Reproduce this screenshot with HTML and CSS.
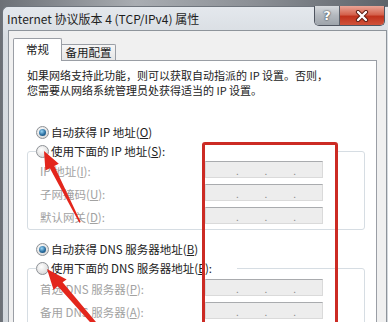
FILE: index.html
```html
<!DOCTYPE html>
<html lang="zh-CN">
<head>
<meta charset="utf-8">
<link rel="stylesheet" href="styles.css">
</head>
<body>
<div class="desk">
  <div class="window">
    <div class="titlebar">
      <span class="title">Internet 协议版本 4 (TCP/IPv4) 属性</span>
      <div class="caption-btns">
        <span class="cbtn help">?</span>
        <span class="cbtn close">
          <svg width="14" height="12" viewBox="0 0 14 12"><path d="M3 2 L11 10 M11 2 L3 10" stroke="#5a1a10" stroke-width="4.2" stroke-linecap="round"/><path d="M3 2 L11 10 M11 2 L3 10" stroke="#fff" stroke-width="2.4" stroke-linecap="round"/></svg>
        </span>
      </div>
    </div>
    <div class="client">
      <div class="tabs">
        <div class="tab active">常规</div>
        <div class="tab">备用配置</div>
      </div>
      <div class="panel">
        <p class="intro">如果网络支持此功能，则可以获取自动指派的 IP 设置。否则，<br>您需要从网络系统管理员处获得适当的 IP 设置。</p>
        <div class="radio first"><span class="rb on"></span><span>自动获得 IP 地址(<u>O</u>)</span></div>
        <fieldset class="group ipgroup">
          <legend class="legend wide"><span class="rb"></span><span>使用下面的 IP 地址(<u>S</u>):</span></legend>
          <div class="row"><span class="lbl">IP 地址(<u>I</u>):</span><span class="ipbox"><i>.</i><i>.</i><i>.</i></span></div>
          <div class="row"><span class="lbl">子网掩码(<u>U</u>):</span><span class="ipbox"><i>.</i><i>.</i><i>.</i></span></div>
          <div class="row"><span class="lbl">默认网关(<u>D</u>):</span><span class="ipbox"><i>.</i><i>.</i><i>.</i></span></div>
        </fieldset>
        <div class="radio dns"><span class="rb on"></span><span>自动获得 DNS 服务器地址(<u>B</u>)</span></div>
        <fieldset class="group dnsgroup">
          <legend class="legend narrow"><span class="rb"></span><span>使用下面的 DNS 服务器地址(<u>E</u>):</span></legend>
          <div class="row"><span class="lbl">首选 DNS 服务器(<u>P</u>):</span><span class="ipbox"><i>.</i><i>.</i><i>.</i></span></div>
          <div class="row"><span class="lbl">备用 DNS 服务器(<u>A</u>):</span><span class="ipbox"><i>.</i><i>.</i><i>.</i></span></div>
        </fieldset>
      </div>
    </div>
  </div>
  <div class="redbox"></div>
  <svg class="arrows" width="388" height="322" viewBox="0 0 388 322">
    <polygon fill="#e3261c" points="44,151 58.8,163.7 54.3,166.0 80.7,222.0 79.3,222.8 49.9,168.2 45.4,170.5"/>
    <polygon fill="#e3261c" points="47,269 66.6,279.4 62.6,282.3 107.5,335.7 104.5,338.3 57.6,285.9 53.6,290.0"/>
  </svg>
</div>
</body>
</html>
```
FILE: styles.css
```css
* { box-sizing: border-box; }
html, body { margin: 0; padding: 0; }
body {
  font-family: "Noto Sans CJK SC", "Noto Sans", sans-serif;
  font-size: 11.5px;
  color: #1a1a1a;
}
.desk {
  position: relative;
  width: 388px;
  height: 322px;
  overflow: hidden;
  background: linear-gradient(90deg, #6c7076, #a9adb2 35%, #8c9096 65%, #5d636a);
}
.window {
  margin: 6px 0 0 2px;
  height: 330px;
  border: 1px solid #6f757d;
  border-right: none;
  border-bottom: none;
  border-radius: 6px 0 0 0;
  background: linear-gradient(#e4e8ed, #d8dde2 30px, #d2d7dc);
  display: flex;
  flex-direction: column;
}
.titlebar {
  height: 23px;
  display: flex;
  justify-content: space-between;
  align-items: flex-start;
  flex: none;
}
.title {
  padding: 4px 0 0 4px;
  font-size: 12px;
  line-height: 15px;
  color: #1e1e1e;
}
.caption-btns {
  display: flex;
  margin: -1px 3px 0 0;
  border: 1px solid #4f5560;
  border-top: none;
  border-radius: 0 0 5px 5px;
  overflow: hidden;
}
.cbtn {
  height: 19px;
  display: flex;
  align-items: center;
  justify-content: center;
}
.help {
  width: 25px;
  background: linear-gradient(#d6d9dd, #b3b8be 50%, #9ea4ab);
  border-right: 1px solid #5b616b;
  color: #fff;
  font-family: "DejaVu Sans", sans-serif;
  font-weight: bold;
  font-size: 13px;
  text-shadow: 0 0 2px #394049, 0 0 1px #394049;
}
.close {
  width: 44px;
  background: linear-gradient(#e9a597, #d4624d 45%, #c0321c 55%, #d0523a);
}
.client {
  flex: 1;
  margin: 0 1px 0 5px;
  border: 1px solid #8e949b;
  background: #f0f0f0;
}
.tabs {
  display: flex;
  align-items: flex-end;
  margin: 7px 0 0 4px;
  position: relative;
  z-index: 1;
}
.tab {
  height: 16px;
  width: 54px;
  border: 1px solid #9a9ea5;
  border-left: none;
  border-bottom: none;
  background: linear-gradient(#f6f6f6, #e6e6e6);
  text-align: center;
  line-height: 15px;
  font-size: 11.5px;
  border-radius: 0 2px 0 0;
}
.tab.active {
  height: 23px;
  width: 49px;
  border-left: 1px solid #9a9ea5;
  background: #fff;
  margin-bottom: -1px;
  line-height: 20px;
  border-radius: 2px 2px 0 0;
}
.panel {
  margin-left: 4px;
  width: 364px;
  height: 270px;
  border: 1px solid #9a9ea5;
  background: #fff;
  padding: 0 0 0 13px;
}
.intro {
  margin: 7px 0 0 0;
  font-size: 11px;
  line-height: 15px;
  white-space: nowrap;
  color: #222;
}
u { text-decoration: underline; text-underline-offset: 1px; }
.radio, .legend {
  display: flex;
  align-items: center;
  height: 14px;
  line-height: 14px;
  white-space: nowrap;
  color: #222;
}
.radio { padding-left: 9px; }
.radio.first { margin-top: 27px; }
.radio.dns { margin-top: 12px; }
.rb {
  width: 13px;
  height: 13px;
  border-radius: 50%;
  border: 1px solid #8d9196;
  background: radial-gradient(circle at 40% 35%, #ffffff, #e2e2e2 60%, #cfcfcf);
  flex: none;
  margin-right: 2px;
  display: flex;
  align-items: center;
  justify-content: center;
}
.rb.on::after {
  content: "";
  width: 7px;
  height: 7px;
  border-radius: 50%;
  background: radial-gradient(circle at 40% 35%, #9ad6f6, #2a6ea0 55%, #0f3c62);
}
.group {
  margin: 5px 0 0 0;
  width: 338px;
  padding: 0 0 5px 12px;
  border: 1px solid #d6dde3;
  border-radius: 3px;
  min-inline-size: 0;
}
.legend {
  padding: 0;
  margin-left: -4px;
  background: #fff;
}
.legend.wide { width: 300px; }
.legend.narrow { width: 201px; }
.row {
  display: flex;
  align-items: center;
  height: 17px;
  margin-top: 6px;
}
.ipgroup .row:first-of-type { margin-top: 3px; }
.dnsgroup .row:first-of-type { margin-top: 4px; }
.lbl {
  width: 165px;
  color: #a2a2a2;
  white-space: nowrap;
  padding-top: 2px;
}
.ipbox {
  width: 118px;
  height: 17px;
  border: 1px solid #dadada;
  border-top-color: #a9abae;
  background: #ededed;
  display: flex;
  justify-content: space-evenly;
  padding-left: 4px;
}
.ipbox i {
  font-style: normal;
  color: #8a8a8a;
  font-size: 10px;
  line-height: 17px;
}
.redbox {
  position: absolute;
  left: 202px;
  top: 142px;
  width: 136px;
  height: 200px;
  border: 3px solid #cc2b24;
  border-radius: 3px;
}
.arrows {
  position: absolute;
  left: 0;
  top: 0;
}
```
